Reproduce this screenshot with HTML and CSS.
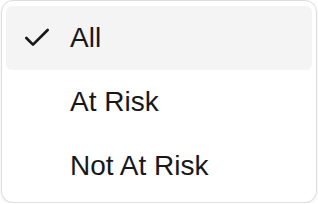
FILE: index.html
```html
<!DOCTYPE html>
<html>
<head>
<meta charset="utf-8">
<link rel="stylesheet" href="styles.css">
</head>
<body>
<div class="menu">
  <div class="item active">
    <span class="check"><svg viewBox="0 0 24 24" width="32" height="32" fill="none" stroke="currentColor" stroke-width="2" stroke-linecap="round" stroke-linejoin="round"><path d="M20 6 9 17l-5-5"/></svg></span>
    <span class="label">All</span>
  </div>
  <div class="item">
    <span class="check"></span>
    <span class="label">At Risk</span>
  </div>
  <div class="item">
    <span class="check"></span>
    <span class="label">Not At Risk</span>
  </div>
</div>
</body>
</html>
```
FILE: styles.css
```css
html, body {
  margin: 0;
  padding: 0;
  background: #ffffff;
}
body {
  font-family: "Liberation Sans", Arial, sans-serif;
}
.menu {
  margin-left: 1px;
  width: 316px;
  box-sizing: border-box;
  border: 1px solid #dedee0;
  border-radius: 12px;
  padding: 5px 4px 4px;
  background: #ffffff;
  box-shadow: 0 1px 3px rgba(0, 0, 0, 0.08);
}
.item {
  display: flex;
  align-items: center;
  height: 64px;
  border-radius: 6px;
  color: #18181b;
  font-size: 28px;
  line-height: 64px;
}
.item.active {
  background: #f4f4f5;
}
.check {
  width: 32px;
  height: 32px;
  margin-left: 15px;
  margin-right: 17px;
  display: flex;
}
.check svg {
  display: block;
}
.label {
  white-space: nowrap;
}
```
